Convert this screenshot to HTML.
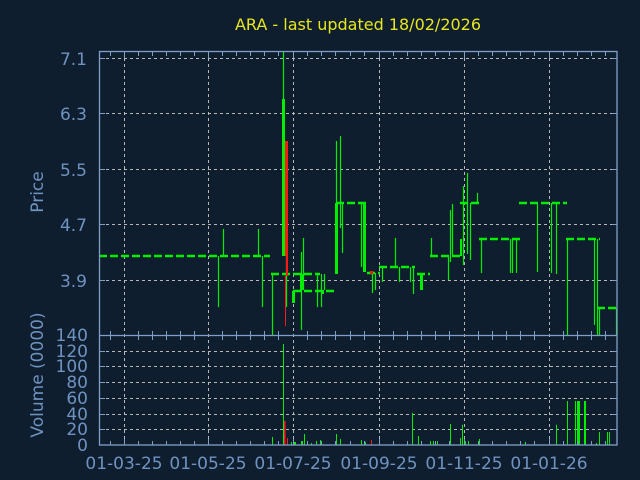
<!DOCTYPE html>
<html><head><meta charset="utf-8"><style>
html,body{margin:0;padding:0;background:#0f1e2f;}
svg{display:block}
text{font-family:"DejaVu Sans","Liberation Sans",sans-serif;}
</style></head><body>
<svg width="640" height="480" viewBox="0 0 640 480" xmlns="http://www.w3.org/2000/svg">
<rect width="640" height="480" fill="#0f1e2f"/>
<text x="358" y="30" fill="#e6e61e" font-size="16" text-anchor="middle">ARA - last updated 18/02/2026</text>
<g stroke="#b8b8b8" stroke-width="1" stroke-dasharray="3 3">
<line x1="100" y1="58.5" x2="617" y2="58.5"/><line x1="100" y1="113.5" x2="617" y2="113.5"/>
<line x1="100" y1="169.5" x2="617" y2="169.5"/><line x1="100" y1="224.5" x2="617" y2="224.5"/>
<line x1="100" y1="280.5" x2="617" y2="280.5"/>
<line x1="100" y1="351.5" x2="617" y2="351.5"/><line x1="100" y1="366.5" x2="617" y2="366.5"/>
<line x1="100" y1="382.5" x2="617" y2="382.5"/><line x1="100" y1="398.5" x2="617" y2="398.5"/>
<line x1="100" y1="414.5" x2="617" y2="414.5"/><line x1="100" y1="429.5" x2="617" y2="429.5"/>
<line x1="124.5" y1="52" x2="124.5" y2="445"/><line x1="208.5" y1="52" x2="208.5" y2="445"/>
<line x1="293.5" y1="52" x2="293.5" y2="445"/><line x1="379.5" y1="52" x2="379.5" y2="445"/>
<line x1="464.5" y1="52" x2="464.5" y2="445"/><line x1="549.5" y1="52" x2="549.5" y2="445"/>
</g>
<g stroke="#00ee00" fill="none">
<g stroke-width="2.5" stroke-dasharray="8 3">
<line x1="99" y1="256" x2="270" y2="256"/>
<line x1="271" y1="274" x2="320" y2="274"/>
<line x1="293" y1="291" x2="337" y2="291"/>
<line x1="336" y1="203" x2="366" y2="203"/>
<line x1="367" y1="273" x2="380" y2="273"/>
<line x1="379" y1="267" x2="415" y2="267"/>
<line x1="417" y1="274" x2="430" y2="274"/>
<line x1="430" y1="256" x2="462" y2="256"/>
<line x1="460" y1="203" x2="480" y2="203"/>
<line x1="479" y1="239" x2="520" y2="239"/>
<line x1="519" y1="203" x2="567" y2="203"/>
<line x1="566" y1="239" x2="600" y2="239"/>
<line x1="597" y1="308" x2="617" y2="308"/>
</g>
<g stroke-width="1.2">
<line x1="218.5" y1="256" x2="218.5" y2="307"/><line x1="223.5" y1="229" x2="223.5" y2="256"/>
<line x1="258.5" y1="229" x2="258.5" y2="256"/><line x1="262.5" y1="256" x2="262.5" y2="307"/>
<line x1="272.5" y1="274" x2="272.5" y2="335"/><line x1="283.5" y1="51" x2="283.5" y2="256"/>
<line x1="286.5" y1="256" x2="286.5" y2="307"/><line x1="301.5" y1="252" x2="301.5" y2="330"/>
<line x1="303.5" y1="238" x2="303.5" y2="290"/><line x1="317.5" y1="274" x2="317.5" y2="307"/>
<line x1="321.5" y1="274" x2="321.5" y2="307"/><line x1="324.5" y1="274" x2="324.5" y2="290"/>
<line x1="336.5" y1="141" x2="336.5" y2="274"/><line x1="340.5" y1="136" x2="340.5" y2="228"/>
<line x1="342.5" y1="203" x2="342.5" y2="253"/><line x1="361.5" y1="203" x2="361.5" y2="267"/>
<line x1="372.5" y1="273" x2="372.5" y2="293"/><line x1="375.5" y1="273" x2="375.5" y2="290"/>
<line x1="382.5" y1="267" x2="382.5" y2="282"/><line x1="395.5" y1="238" x2="395.5" y2="267"/>
<line x1="399.5" y1="267" x2="399.5" y2="282"/><line x1="410.5" y1="267" x2="410.5" y2="282"/>
<line x1="413.5" y1="267" x2="413.5" y2="294"/><line x1="431.5" y1="238" x2="431.5" y2="256"/>
<line x1="448.5" y1="256" x2="448.5" y2="280"/><line x1="450.5" y1="210" x2="450.5" y2="262"/>
<line x1="452.5" y1="204" x2="452.5" y2="256"/><line x1="463.5" y1="186" x2="463.5" y2="265"/>
<line x1="467.5" y1="173" x2="467.5" y2="254"/><line x1="470.5" y1="203" x2="470.5" y2="260"/>
<line x1="477.5" y1="193" x2="477.5" y2="203"/><line x1="481.5" y1="239" x2="481.5" y2="273"/>
<line x1="510.5" y1="239" x2="510.5" y2="273"/><line x1="512.5" y1="239" x2="512.5" y2="273"/>
<line x1="516.5" y1="239" x2="516.5" y2="273"/><line x1="537.5" y1="203" x2="537.5" y2="272"/>
<line x1="551.5" y1="203" x2="551.5" y2="273"/><line x1="556.5" y1="203" x2="556.5" y2="274"/>
<line x1="567.5" y1="239" x2="567.5" y2="335"/><line x1="594.5" y1="239" x2="594.5" y2="325"/>
<line x1="597.5" y1="239" x2="597.5" y2="335"/><line x1="599.5" y1="308" x2="599.5" y2="335"/>
<line x1="616.5" y1="308" x2="616.5" y2="335"/>
</g>
<g fill="#00ee00" stroke="none">
<rect x="282" y="99" width="3" height="157"/>
<rect x="335" y="203" width="3" height="71"/>
<rect x="363" y="203" width="3" height="69"/>
<rect x="292" y="291" width="3" height="12"/>
<rect x="300" y="274" width="3" height="16"/>
<rect x="420" y="274" width="3" height="16"/>
<rect x="460" y="239" width="2" height="17"/>
<rect x="322" y="290" width="2" height="4"/>
</g>
</g>
<g fill="#ff1a1a"><rect x="285" y="141" width="3" height="115"/><rect x="286" y="256" width="2" height="20"/><rect x="285" y="276" width="1" height="50"/><rect x="370" y="271" width="3" height="3"/></g>
<g fill="#00ee00">
<rect x="272" y="437" width="1" height="8"/><rect x="283" y="344" width="1" height="101"/>
<rect x="291" y="442" width="1" height="3"/><rect x="294" y="442" width="2" height="3"/>
<rect x="301" y="441" width="2" height="4"/><rect x="304" y="434" width="1" height="11"/>
<rect x="311" y="443" width="1" height="2"/><rect x="316" y="441" width="1" height="4"/>
<rect x="320" y="440" width="1" height="5"/><rect x="336" y="434" width="1" height="11"/>
<rect x="340" y="439" width="1" height="6"/><rect x="361" y="440" width="1" height="5"/>
<rect x="364" y="442" width="2" height="3"/><rect x="412" y="413" width="1" height="32"/>
<rect x="418" y="436" width="1" height="9"/><rect x="430" y="441" width="1" height="4"/>
<rect x="433" y="441" width="1" height="4"/><rect x="437" y="441" width="1" height="4"/>
<rect x="450" y="424" width="1" height="21"/><rect x="460" y="438" width="1" height="7"/>
<rect x="462" y="425" width="1" height="20"/><rect x="465" y="441" width="1" height="4"/>
<rect x="468" y="441" width="1" height="4"/><rect x="479" y="439" width="1" height="6"/>
<rect x="525" y="442" width="1" height="3"/><rect x="556" y="425" width="1" height="20"/>
<rect x="567" y="401" width="1" height="44"/><rect x="575" y="401" width="1" height="44"/>
<rect x="577" y="401" width="3" height="44"/><rect x="584" y="401" width="2" height="44"/>
<rect x="596" y="443" width="1" height="2"/><rect x="599" y="432" width="1" height="13"/>
<rect x="607" y="432" width="1" height="13"/><rect x="609" y="432" width="1" height="13"/>
</g>
<g fill="#ff1a1a"><rect x="284" y="421" width="1.5" height="24"/><rect x="287" y="438" width="1" height="7"/><rect x="371" y="440" width="1" height="5"/></g>
<g stroke="#7f9fc8" stroke-width="1.3" fill="none">
<rect x="99.5" y="51.5" width="517.5" height="393.5"/>
<line x1="99.5" y1="335.5" x2="617" y2="335.5"/>
</g>
<g stroke="#7f9fc8" stroke-width="1">
<path d="M110.5 52v4M138.5 52v4M152.5 52v4M166.5 52v4M180.5 52v4M194.5 52v4M222.5 52v4M236.5 52v4M250.5 52v4M264.5 52v4M278.5 52v4M307.5 52v4M321.5 52v4M335.5 52v4M350.5 52v4M364.5 52v4M393.5 52v4M407.5 52v4M421.5 52v4M435.5 52v4M449.5 52v4M478.5 52v4M492.5 52v4M506.5 52v4M520.5 52v4M534.5 52v4M563.5 52v4M577.5 52v4M591.5 52v4M605.5 52v4"/>
<path d="M110.5 335v-4M138.5 335v-4M152.5 335v-4M166.5 335v-4M180.5 335v-4M194.5 335v-4M222.5 335v-4M236.5 335v-4M250.5 335v-4M264.5 335v-4M278.5 335v-4M307.5 335v-4M321.5 335v-4M335.5 335v-4M350.5 335v-4M364.5 335v-4M393.5 335v-4M407.5 335v-4M421.5 335v-4M435.5 335v-4M449.5 335v-4M478.5 335v-4M492.5 335v-4M506.5 335v-4M520.5 335v-4M534.5 335v-4M563.5 335v-4M577.5 335v-4M591.5 335v-4M605.5 335v-4"/>
<path d="M110.5 336v4M138.5 336v4M152.5 336v4M166.5 336v4M180.5 336v4M194.5 336v4M222.5 336v4M236.5 336v4M250.5 336v4M264.5 336v4M278.5 336v4M307.5 336v4M321.5 336v4M335.5 336v4M350.5 336v4M364.5 336v4M393.5 336v4M407.5 336v4M421.5 336v4M435.5 336v4M449.5 336v4M478.5 336v4M492.5 336v4M506.5 336v4M520.5 336v4M534.5 336v4M563.5 336v4M577.5 336v4M591.5 336v4M605.5 336v4"/>
<path d="M110.5 445v-4M138.5 445v-4M152.5 445v-4M166.5 445v-4M180.5 445v-4M194.5 445v-4M222.5 445v-4M236.5 445v-4M250.5 445v-4M264.5 445v-4M278.5 445v-4M307.5 445v-4M321.5 445v-4M335.5 445v-4M350.5 445v-4M364.5 445v-4M393.5 445v-4M407.5 445v-4M421.5 445v-4M435.5 445v-4M449.5 445v-4M478.5 445v-4M492.5 445v-4M506.5 445v-4M520.5 445v-4M534.5 445v-4M563.5 445v-4M577.5 445v-4M591.5 445v-4M605.5 445v-4"/>
<path d="M124.5 52v6M208.5 52v6M293.5 52v6M379.5 52v6M464.5 52v6M549.5 52v6M124.5 445v-6M208.5 445v-6M293.5 445v-6M379.5 445v-6M464.5 445v-6M549.5 445v-6"/>
<path d="M100 58.5h5M100 113.5h5M100 169.5h5M100 224.5h5M100 280.5h5M612 58.5h5M612 113.5h5M612 169.5h5M612 224.5h5M612 280.5h5"/>
<path d="M100 351.5h5M100 366.5h5M100 382.5h5M100 398.5h5M100 414.5h5M100 429.5h5M612 351.5h5M612 366.5h5M612 382.5h5M612 398.5h5M612 414.5h5M612 429.5h5"/>
</g>
<g fill="#6f93c0" font-size="17" text-anchor="end">
<text x="87" y="65">7.1</text><text x="87" y="120">6.3</text><text x="87" y="176">5.5</text>
<text x="87" y="231">4.7</text><text x="87" y="287">3.9</text>
<text x="88" y="341">140</text><text x="88" y="357">120</text><text x="88" y="372">100</text>
<text x="88" y="388">80</text><text x="88" y="404">60</text><text x="88" y="420">40</text>
<text x="88" y="435">20</text><text x="88" y="451">0</text>
</g>
<g fill="#6f93c0" font-size="17" text-anchor="middle">
<text x="124" y="469">01-03-25</text><text x="208" y="469">01-05-25</text><text x="293" y="469">01-07-25</text>
<text x="379" y="469">01-09-25</text><text x="464" y="469">01-11-25</text><text x="549" y="469">01-01-26</text>
<text transform="translate(43 192) rotate(-90)">Price</text>
<text transform="translate(43 375) rotate(-90)">Volume (0000)</text>
</g>
</svg>
</body></html>
